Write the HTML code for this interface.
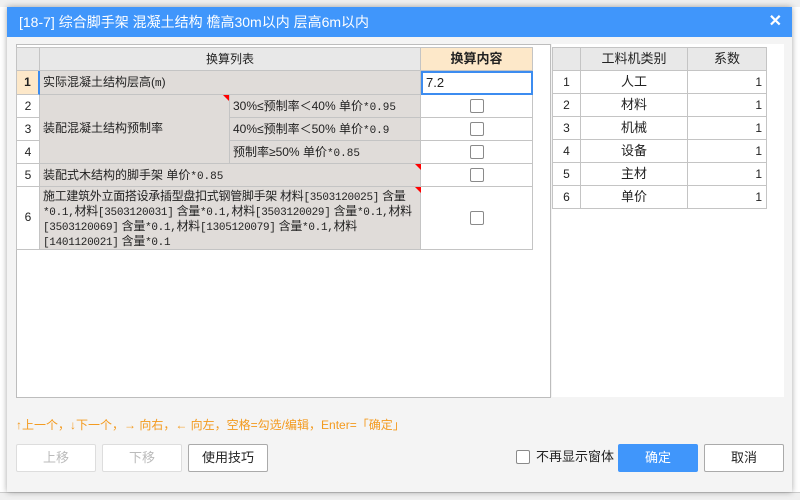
<!DOCTYPE html>
<html><head><meta charset="utf-8"><style>
*{margin:0;padding:0;box-sizing:border-box}
body{width:800px;height:500px;overflow:hidden;background:#fff;font-family:"Liberation Sans","Noto Sans CJK SC",sans-serif;font-size:12px;color:#222;position:relative}
.a{position:absolute}
.dlg{left:7px;top:7px;width:785px;height:485px;background:#f4f4f4;box-shadow:0 0 6px rgba(0,0,0,.35)}
.title{left:7px;top:7px;width:785px;height:30px;background:#4096fb;color:#fff;font-size:14px;line-height:30px;padding-left:12px}
.c{position:absolute;border-right:1px solid #c4c4c4;border-bottom:1px solid #c4c4c4;line-height:22px;overflow:hidden;white-space:nowrap}
.g{background:#e0dcd9}
.h{background:#e8e8e8;text-align:center}
.w{background:#fff}
.n{text-align:center;background:#fff}
.m{font-family:"Liberation Mono","Noto Sans CJK SC",monospace}
.cb{position:absolute;width:14px;height:14px;border:1px solid #8a8a8a;border-radius:2px;background:#fff}
.tri{position:absolute;width:0;height:0;border-top:6px solid #f00;border-left:6px solid transparent}
.btn{position:absolute;top:444px;width:80px;height:28px;border:1px solid #c8c8c8;border-radius:2px;background:#fff;text-align:center;line-height:26px;font-size:13px}
.ln{height:15px;line-height:15px;overflow:visible}
.ln span{font-size:11px}
</style></head><body>
<div class="a" style="left:0;top:0;width:800px;height:7px;background:#f0f0f0"></div>
<div class="a" style="left:0;top:492px;width:800px;height:8px;background:#f0f0f0;border-top:1px solid #ccc"></div>
<div class="a dlg"></div>
<div class="a title">[18-7] 综合脚手架 混凝土结构 檐高30m以内 层高6m以内<span style="position:absolute;right:10px;top:0;font-size:16px;font-weight:bold">✕</span></div>

<div class="a" style="left:16px;top:44px;width:535px;height:354px;background:#fff;border:1px solid #bdbdbd"></div>
<div class="a" style="left:552px;top:44px;width:232px;height:353px;background:#fff"></div>

<div class="c h" style="left:16px;top:47px;width:24px;height:24px;border-left:1px solid #c4c4c4;border-top:1px solid #c4c4c4"></div>
<div class="c h" style="left:40px;top:47px;width:381px;height:24px;border-top:1px solid #c4c4c4">换算列表</div>
<div class="c" style="left:421px;top:47px;width:112px;height:24px;background:#fde8c9;text-align:center;font-weight:bold;border-top:1px solid #c4c4c4;font-size:13px">换算内容</div>

<div class="c" style="left:16px;top:71px;width:24px;height:24px;background:#fde8c9;text-align:center;font-weight:bold;border-left:1px solid #c4c4c4;border-right:2px solid #3c8cf0">1</div>
<div class="c g" style="left:40px;top:71px;width:381px;height:24px;padding-left:3px">实际混凝土结构层高(<span class="m" style="font-size:11px">m</span>)</div>
<div class="a" style="left:421px;top:71px;width:112px;height:24px;border:2px solid #3c8cf0;background:#fff;padding-left:3px;line-height:20px;font-size:13px">7.2</div>

<div class="c n" style="left:16px;top:95px;width:24px;height:23px;border-left:1px solid #c4c4c4">2</div>
<div class="c n" style="left:16px;top:118px;width:24px;height:23px;border-left:1px solid #c4c4c4">3</div>
<div class="c n" style="left:16px;top:141px;width:24px;height:23px;border-left:1px solid #c4c4c4">4</div>
<div class="c g" style="left:40px;top:95px;width:190px;height:69px;line-height:67px;padding-left:3px">装配混凝土结构预制率</div>
<div class="tri" style="left:223px;top:95px"></div>
<div class="c g" style="left:230px;top:95px;width:191px;height:23px;padding-left:3px">30%≤预制率＜40% 单价<span class="m" style="font-size:11px">*0.95</span></div>
<div class="c g" style="left:230px;top:118px;width:191px;height:23px;padding-left:3px">40%≤预制率＜50% 单价<span class="m" style="font-size:11px">*0.9</span></div>
<div class="c g" style="left:230px;top:141px;width:191px;height:23px;padding-left:3px">预制率≥50% 单价<span class="m" style="font-size:11px">*0.85</span></div>
<div class="c w" style="left:421px;top:95px;width:112px;height:23px"></div>
<div class="c w" style="left:421px;top:118px;width:112px;height:23px"></div>
<div class="c w" style="left:421px;top:141px;width:112px;height:23px"></div>

<div class="c n" style="left:16px;top:164px;width:24px;height:23px;border-left:1px solid #c4c4c4">5</div>
<div class="c g" style="left:40px;top:164px;width:381px;height:23px;padding-left:3px">装配式木结构的脚手架 单价<span class="m" style="font-size:11px">*0.85</span></div>
<div class="tri" style="left:415px;top:164px"></div>
<div class="c w" style="left:421px;top:164px;width:112px;height:23px"></div>

<div class="c n" style="left:16px;top:187px;width:24px;height:63px;line-height:61px;border-left:1px solid #c4c4c4">6</div>
<div class="c g" style="left:40px;top:187px;width:381px;height:63px;padding-left:3px;padding-top:2px;font-size:12px;letter-spacing:-0.3px">
<div class="ln">施工建筑外立面搭设承插型盘扣式钢管脚手架 材料<span class="m">[3503120025]</span> 含量</div>
<div class="ln"><span class="m">*0.1,</span>材料<span class="m">[3503120031]</span> 含量<span class="m">*0.1,</span>材料<span class="m">[3503120029]</span> 含量<span class="m">*0.1,</span>材料</div>
<div class="ln"><span class="m">[3503120069]</span> 含量<span class="m">*0.1,</span>材料<span class="m">[1305120079]</span> 含量<span class="m">*0.1,</span>材料</div>
<div class="ln"><span class="m">[1401120021]</span> 含量<span class="m">*0.1</span></div>
</div>
<div class="tri" style="left:415px;top:187px"></div>
<div class="c w" style="left:421px;top:187px;width:112px;height:63px"></div>

<div class="cb" style="left:470px;top:99px"></div>
<div class="cb" style="left:470px;top:122px"></div>
<div class="cb" style="left:470px;top:145px"></div>
<div class="cb" style="left:470px;top:168px"></div>
<div class="cb" style="left:470px;top:211px"></div>

<div class="c h" style="left:552px;top:47px;width:29px;height:24px;border-left:1px solid #c4c4c4;border-top:1px solid #c4c4c4"></div>
<div class="c h" style="left:581px;top:47px;width:107px;height:24px;border-top:1px solid #c4c4c4;font-size:13px">工料机类别</div>
<div class="c h" style="left:688px;top:47px;width:79px;height:24px;border-top:1px solid #c4c4c4;font-size:13px">系数</div>
<div class="c n" style="left:552px;top:71px;width:29px;height:23px;border-left:1px solid #c4c4c4">1</div><div class="c n" style="left:581px;top:71px;width:107px;height:23px;font-size:13px">人工</div><div class="c w" style="left:688px;top:71px;width:79px;height:23px;text-align:right;padding-right:4px">1</div>
<div class="c n" style="left:552px;top:94px;width:29px;height:23px;border-left:1px solid #c4c4c4">2</div><div class="c n" style="left:581px;top:94px;width:107px;height:23px;font-size:13px">材料</div><div class="c w" style="left:688px;top:94px;width:79px;height:23px;text-align:right;padding-right:4px">1</div>
<div class="c n" style="left:552px;top:117px;width:29px;height:23px;border-left:1px solid #c4c4c4">3</div><div class="c n" style="left:581px;top:117px;width:107px;height:23px;font-size:13px">机械</div><div class="c w" style="left:688px;top:117px;width:79px;height:23px;text-align:right;padding-right:4px">1</div>
<div class="c n" style="left:552px;top:140px;width:29px;height:23px;border-left:1px solid #c4c4c4">4</div><div class="c n" style="left:581px;top:140px;width:107px;height:23px;font-size:13px">设备</div><div class="c w" style="left:688px;top:140px;width:79px;height:23px;text-align:right;padding-right:4px">1</div>
<div class="c n" style="left:552px;top:163px;width:29px;height:23px;border-left:1px solid #c4c4c4">5</div><div class="c n" style="left:581px;top:163px;width:107px;height:23px;font-size:13px">主材</div><div class="c w" style="left:688px;top:163px;width:79px;height:23px;text-align:right;padding-right:4px">1</div>
<div class="c n" style="left:552px;top:186px;width:29px;height:23px;border-left:1px solid #c4c4c4">6</div><div class="c n" style="left:581px;top:186px;width:107px;height:23px;font-size:13px">单价</div><div class="c w" style="left:688px;top:186px;width:79px;height:23px;text-align:right;padding-right:4px">1</div>

<div class="a" style="left:16px;top:416px;color:#f39a1e;font-size:12px">↑上一个，↓下一个，→ 向右，← 向左，空格=勾选/编辑，Enter=「确定」</div>

<div class="btn" style="left:16px;color:#bbb;border-color:#ddd">上移</div>
<div class="btn" style="left:102px;color:#bbb;border-color:#ddd">下移</div>
<div class="btn" style="left:188px;border-color:#aaa">使用技巧</div>
<div class="cb" style="left:516px;top:450px;width:14px;height:14px"></div>
<div class="a" style="left:536px;top:449px;font-size:13px;line-height:16px">不再显示窗体</div>
<div class="btn" style="left:618px;background:#4096fb;border-color:#4096fb;color:#fff">确定</div>
<div class="btn" style="left:704px;border-color:#aaa">取消</div>
</body></html>
